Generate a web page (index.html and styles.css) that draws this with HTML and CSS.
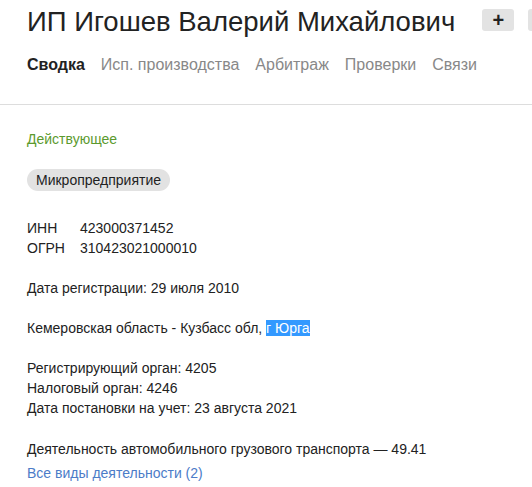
FILE: index.html
```html
<!DOCTYPE html>
<html lang="ru">
<head>
<meta charset="utf-8">
<link rel="stylesheet" href="styles.css">
</head>
<body>
<header class="header">
  <div class="title-row">
    <h1 class="title">ИП Игошев Валерий Михайлович</h1>
    <div class="actions">
      <button class="btn">+</button>
      <button class="btn"></button>
    </div>
  </div>
  <nav class="tabs">
    <span class="tab active">Сводка</span>
    <span class="tab">Исп. производства</span>
    <span class="tab">Арбитраж</span>
    <span class="tab">Проверки</span>
    <span class="tab">Связи</span>
  </nav>
</header>
<main class="content">
  <div class="status">Действующее</div>
  <div class="badge-row"><span class="badge">Микропредприятие</span></div>
  <dl class="ids">
    <div class="id-row"><dt>ИНН</dt><dd>423000371452</dd></div>
    <div class="id-row"><dt>ОГРН</dt><dd>310423021000010</dd></div>
  </dl>
  <p class="block">Дата регистрации: 29 июля 2010</p>
  <p class="block">Кемеровская область - Кузбасс обл, <span class="sel">г Юрга</span></p>
  <div class="block">
    <div>Регистрирующий орган: 4205</div>
    <div>Налоговый орган: 4246</div>
    <div>Дата постановки на учет: 23 августа 2021</div>
  </div>
  <div class="block activity">
    <div>Деятельность автомобильного грузового транспорта — 49.41</div>
    <a class="link" href="#">Все виды деятельности (2)</a>
  </div>
</main>
</body>
</html>
```
FILE: styles.css
```css
html, body {
  margin: 0;
  padding: 0;
  background: #fff;
  overflow: hidden;
}
body {
  font-family: "Liberation Sans", Arial, sans-serif;
  font-size: 14px;
  line-height: 20px;
  color: #222;
}
.header {
  border-bottom: 1px solid #ddd;
  padding: 0 0 0 27px;
  overflow: hidden;
}
.title-row {
  display: flex;
  align-items: flex-start;
  gap: 27px;
  padding-top: 4px;
}
.title {
  margin: 0;
  font-size: 27.5px;
  font-weight: normal;
  line-height: 36px;
  white-space: nowrap;
  color: #222;
  flex: none;
}
.actions {
  display: flex;
  gap: 14px;
  padding-top: 5px;
  flex: none;
}
.btn {
  width: 32px;
  height: 22px;
  border: none;
  border-radius: 3px;
  background: #e3e3e3;
  font-family: "Liberation Sans", Arial, sans-serif;
  font-size: 20px;
  font-weight: bold;
  line-height: 22px;
  padding: 0;
  color: #222;
}
.tabs {
  display: flex;
  gap: 16px;
  font-size: 16px;
  line-height: 20px;
  padding: 15px 0 29px;
  color: #888;
}
.tab.active {
  font-weight: bold;
  color: #222;
}
.content {
  padding: 24px 27px 0;
}
.status {
  color: #5b9a2e;
}
.badge-row {
  margin-top: 20px;
}
.badge {
  display: inline-block;
  background: #e2e2e2;
  border-radius: 11px;
  padding: 1px 9px;
  color: #222;
}
.ids {
  margin: 27px 0 0;
}
.id-row {
  display: flex;
}
.id-row dt {
  width: 53px;
}
.id-row dd {
  margin: 0;
}
.block {
  margin: 20px 0 0;
}
.sel {
  background: #3399ff;
  color: #fff;
}
.activity {
  margin-top: 21px;
}
.link {
  display: block;
  margin-top: 4px;
  color: #4c7cc8;
  text-decoration: none;
}
```
